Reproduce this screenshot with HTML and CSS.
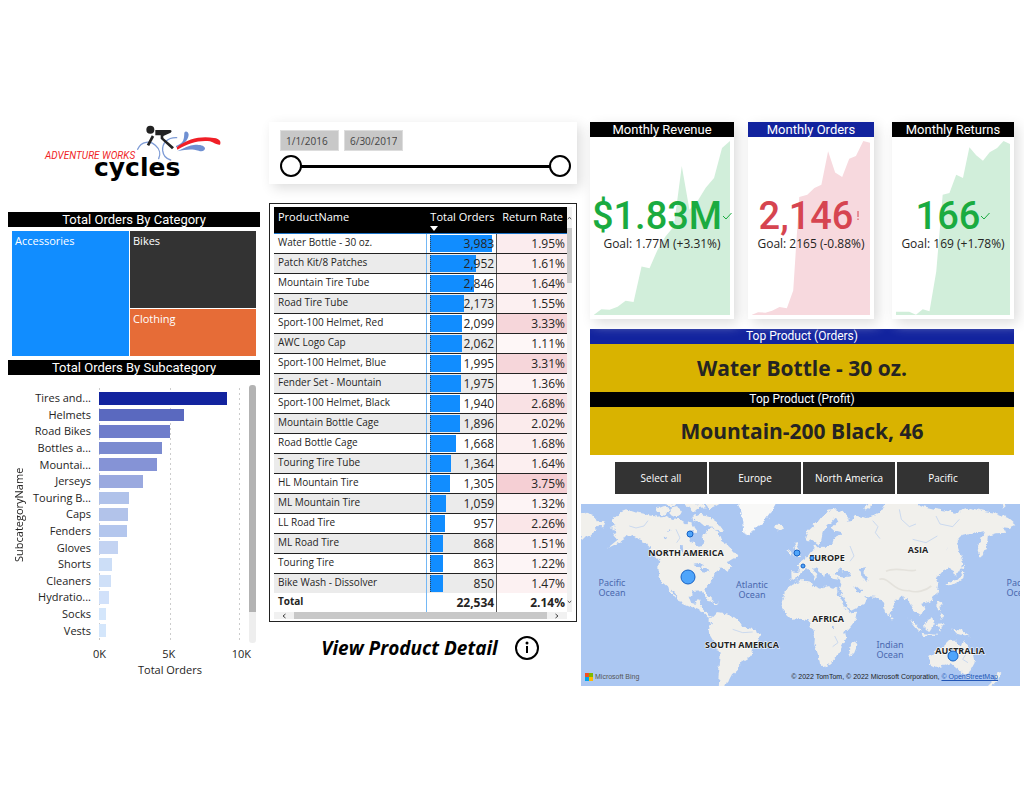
FILE: index.html
```html
<!DOCTYPE html>
<html lang="en">
<head>
<meta charset="utf-8">
<title>Adventure Works Cycles</title>
<link rel="stylesheet" href="styles.css">
</head>
<body>
<main class="report">
  <section class="col col-left">
    <svg class="logo" viewBox="8 122 252 90" role="img" aria-label="Adventure Works Cycles">
      <g transform="translate(0 110) scale(.33333)" fill="none" stroke-linecap="round">
        <path d="M413 118C424 92 452 92 466 106C480 118 482 134 476 146" stroke="#7d9bd6" stroke-width="4"/>
        <path d="M530 83C502 82 486 100 488 122C490 138 500 147 512 150" stroke="#7d9bd6" stroke-width="4"/>
        <path d="M528 108C552 98 552 88 553 68C556 62 565 64 566 74C564 92 552 103 528 112Z" fill="#6f90d2"/>
        <path d="M532 124C560 118 574 116 596 122C606 126 616 122 615 114C612 106 600 104 586 104C566 106 552 114 532 124Z" fill="#6f90d2"/>
        <path d="M530 112C566 84 604 78 642 84C660 86 664 96 660 104C652 106 642 98 630 94C596 90 566 100 532 119Z" fill="#f01f27"/>
        <circle cx="451" cy="59" r="12" fill="#222"/>
        <path d="M466 60L511 60Q518 62 512 68L490 78L490 84L522 112L516 118L482 86L482 76L466 76Z" fill="#222"/>
        <path d="M459 78L444 106" stroke="#222" stroke-width="8" stroke-linecap="butt"/>
      </g>
      <text class="logo-top" x="45" y="159">ADVENTURE WORKS</text>
      <text class="logo-main" x="94" y="176">cycles</text>
    </svg>

    <h2 class="bar-title">Total Orders By Category</h2>
    <div class="treemap">
      <div class="tile accessories">Accessories</div>
      <div class="tile bikes">Bikes</div>
      <div class="tile clothing">Clothing</div>
    </div>

    <h2 class="bar-title">Total Orders By Subcategory</h2>
    <div class="chart">
      <div class="y-title">SubcategoryName</div>
      <div class="labels">
        <span>Tires and...</span><span>Helmets</span><span>Road Bikes</span><span>Bottles a...</span><span>Mountai...</span><span>Jerseys</span><span>Touring B...</span><span>Caps</span><span>Fenders</span><span>Gloves</span><span>Shorts</span><span>Cleaners</span><span>Hydratio...</span><span>Socks</span><span>Vests</span>
      </div>
      <div class="plot">
        <i style="width:90.5%;background:#12239e"></i><i style="width:60%;background:#5a69bf"></i><i style="width:50.5%;background:#6f7dcb"></i><i style="width:44.7%;background:#7b8bd0"></i><i style="width:41%;background:#8593d6"></i><i style="width:31%;background:#9aa9df"></i><i style="width:21.2%;background:#b0c2ea"></i><i style="width:20.7%;background:#b2c3ea"></i><i style="width:20%;background:#b3c6ed"></i><i style="width:13.5%;background:#c3d3f2"></i><i style="width:9.5%;background:#ccdef7"></i><i style="width:8.7%;background:#cfe0f8"></i><i style="width:7.2%;background:#d1e1fa"></i><i style="width:5.3%;background:#d4e6fb"></i><i style="width:5.3%;background:#d4e6fb"></i>
      </div>
      <div class="scroll"></div>
      <div class="ticks"><span>0K</span><span>5K</span><span>10K</span></div>
      <div class="x-title">Total Orders</div>
    </div>
  </section>

  <section class="col col-mid">
    <div class="slicer">
      <div class="dates">
        <input type="text" value="1/1/2016" aria-label="Start date">
        <input type="text" value="6/30/2017" aria-label="End date">
      </div>
      <div class="range">
        <input type="range" min="0" max="100" value="0" aria-label="Range start">
        <input class="range-end" type="range" min="0" max="100" value="100" aria-label="Range end">
      </div>
    </div>

    <div class="matrix">
      <table>
        <thead><tr><th>ProductName</th><th>Total Orders<svg class="sort" viewBox="0 0 8 5"><path d="M0 0H8L4 5Z"/></svg></th><th>Return Rate</th></tr></thead>
        <tbody>
          <tr><td>Water Bottle - 30 oz.</td><td><i style="width:89%"></i><b>3,983</b></td><td style="background:#fbecee">1.95%</td></tr>
          <tr><td>Patch Kit/8 Patches</td><td><i style="width:66%"></i><b>2,952</b></td><td style="background:#fceff0">1.61%</td></tr>
          <tr><td>Mountain Tire Tube</td><td><i style="width:63%"></i><b>2,846</b></td><td style="background:#fceff0">1.64%</td></tr>
          <tr><td>Road Tire Tube</td><td><i style="width:49%"></i><b>2,173</b></td><td style="background:#fcf0f1">1.55%</td></tr>
          <tr><td>Sport-100 Helmet, Red</td><td><i style="width:47%"></i><b>2,099</b></td><td style="background:#f6d6da">3.33%</td></tr>
          <tr><td>AWC Logo Cap</td><td><i style="width:46%"></i><b>2,062</b></td><td style="background:#fef7f7">1.11%</td></tr>
          <tr><td>Sport-100 Helmet, Blue</td><td><i style="width:45%"></i><b>1,995</b></td><td style="background:#f6d6da">3.31%</td></tr>
          <tr><td>Fender Set - Mountain</td><td><i style="width:45%"></i><b>1,975</b></td><td style="background:#fdf3f4">1.36%</td></tr>
          <tr><td>Sport-100 Helmet, Black</td><td><i style="width:44%"></i><b>1,940</b></td><td style="background:#f9e1e4">2.68%</td></tr>
          <tr><td>Mountain Bottle Cage</td><td><i style="width:43%"></i><b>1,896</b></td><td style="background:#fbebec">2.02%</td></tr>
          <tr><td>Road Bottle Cage</td><td><i style="width:38%"></i><b>1,668</b></td><td style="background:#fceff0">1.68%</td></tr>
          <tr><td>Touring Tire Tube</td><td><i style="width:30%"></i><b>1,364</b></td><td style="background:#fceff0">1.64%</td></tr>
          <tr><td>HL Mountain Tire</td><td><i style="width:29%"></i><b>1,305</b></td><td style="background:#f5cfd4">3.75%</td></tr>
          <tr><td>ML Mountain Tire</td><td><i style="width:24%"></i><b>1,059</b></td><td style="background:#fdf4f5">1.32%</td></tr>
          <tr><td>LL Road Tire</td><td><i style="width:22%"></i><b>957</b></td><td style="background:#fae6e8">2.26%</td></tr>
          <tr><td>ML Road Tire</td><td><i style="width:19%"></i><b>868</b></td><td style="background:#fcf1f2">1.51%</td></tr>
          <tr><td>Touring Tire</td><td><i style="width:19%"></i><b>863</b></td><td style="background:#fdf5f6">1.22%</td></tr>
          <tr><td>Bike Wash - Dissolver</td><td><i style="width:19%"></i><b>850</b></td><td style="background:#fcf1f2">1.47%</td></tr>
        </tbody>
        <tfoot><tr><td>Total</td><td><b>22,534</b></td><td>2.14%</td></tr></tfoot>
      </table>
      <div class="vbar">
        <svg viewBox="0 0 6 4"><path d="M1 3.500L3 1L5 3.500"/></svg>
        <div class="vthumb"></div>
        <svg viewBox="0 0 6 4"><path d="M1 .5L3 3L5 .5"/></svg>
      </div>
      <div class="hbar">
        <svg viewBox="0 0 4 6"><path d="M3.500 1L1 3L3.500 5"/></svg>
        <div class="hthumb"></div>
        <svg viewBox="0 0 4 6"><path d="M.5 1L3 3L.5 5"/></svg>
      </div>
    </div>

    <a class="detail" href="#detail">View Product Detail
      <svg viewBox="0 0 26 26"><circle cx="13" cy="13" r="11"/><path d="M13 11V18"/><circle class="dot" cx="13" cy="8" r="1.500"/></svg>
    </a>
  </section>

  <section class="col col-right">
    <div class="kpis">
      <article class="kpi revenue">
        <h2 class="bar-title">Monthly Revenue</h2>
        <div class="kpi-body">
          <svg class="area" viewBox="30 79 409 521" preserveAspectRatio="none"><path d="M30 599L52 583L77 584L101 575L125 557L149 561L173 455L197 460L221 405L245 365L270 335L294 154L317 285L342 258L366 219L391 190L415 100L439 79V600H30Z"/></svg>
          <div class="kpi-text">
            <p class="value">$1.83M<svg viewBox="0 0 10 8"><path d="M1 4L4 7L9.500 1"/></svg></p>
            <p class="goal">Goal: 1.77M (+3.31%)</p>
          </div>
        </div>
      </article>
      <article class="kpi orders">
        <h2 class="bar-title blue">Monthly Orders</h2>
        <div class="kpi-body">
          <svg class="area" viewBox="507 79 352 521" preserveAspectRatio="none"><path d="M507 599L525 592L547 593L567 587L589 576L611 580L630 527L648 247L672 240L693 220L714 210L734 110L755 173L776 187L797 132L817 124L839 79L859 84V600H507Z"/></svg>
          <div class="kpi-text">
            <p class="value">2,146<svg viewBox="0 0 10 8"><path d="M5 -1V5M5 6.500V8"/></svg></p>
            <p class="goal">Goal: 2165 (-0.88%)</p>
          </div>
        </div>
      </article>
      <article class="kpi returns">
        <h2 class="bar-title">Monthly Returns</h2>
        <div class="kpi-body">
          <svg class="area" viewBox="291 79 337 521" preserveAspectRatio="none"><path d="M291 590H330L350 599L370 583L390 589L410 470L429 240L449 235L469 180L489 190L508 98L528 122L548 138L568 113L590 100L609 79L628 88V600H291Z"/></svg>
          <div class="kpi-text">
            <p class="value">166<svg viewBox="0 0 10 8"><path d="M1 4L4 7L9.500 1"/></svg></p>
            <p class="goal">Goal: 169 (+1.78%)</p>
          </div>
        </div>
      </article>
    </div>

    <div class="tops">
      <h2 class="bar-title light blue">Top Product (Orders)</h2>
      <p class="top">Water Bottle - 30 oz.</p>
      <h2 class="bar-title light">Top Product (Profit)</h2>
      <p class="top">Mountain-200 Black, 46</p>
    </div>

    <div class="regions">
      <button type="button">Select all</button>
      <button type="button">Europe</button>
      <button type="button">North America</button>
      <button type="button">Pacific</button>
    </div>

    <div class="map">
      <svg class="world" viewBox="581 504 439 182">
        <defs>
          <filter id="coast" x="-5%" y="-5%" width="110%" height="110%"><feTurbulence type="fractalNoise" baseFrequency="0.17" numOctaves="3" seed="4"/><feDisplacementMap in="SourceGraphic" scale="6" xChannelSelector="R" yChannelSelector="G"/></filter>
        </defs>
        <rect x="581" y="504" width="439" height="182" fill="#abc7f2"/>
        <g filter="url(#coast)">
          <g transform="translate(576 496) scale(.33333)" fill="#f1f0ec">
            <path d="M10 58L30 50L50 56L62 70L87 82L82 94L60 92L62 104L48 112L36 124L24 128L10 122Z"/>
            <path d="M135 46L150 40L175 48L205 54L240 62L265 60L290 72L310 68L330 82L345 78L350 95L338 112L346 138L368 152L384 150L380 126L392 102L410 92L430 118L436 135L455 148L470 163L484 182L462 195L448 190L460 205L472 212L452 224L438 214L428 224L415 235L410 252L396 264L388 278L396 302L386 304L376 286L350 288L338 302L344 320L358 324L366 310L378 314L374 332L386 346L398 358L408 362L400 368L380 348L350 336L322 324L304 300L286 278L296 304L288 296L272 270L260 260L249 238L247 212L250 192L238 176L222 156L205 136L180 126L165 118L150 126L128 140L108 150L92 158L124 132L112 118L120 106L104 96L120 86L108 74L122 60Z"/>
            <path d="M240 38L262 30L280 42L272 56L250 54ZM284 34L306 30L318 48L300 62L284 54ZM270 22H300L292 30H276ZM320 22H380L390 34L366 36L352 50L336 34ZM350 62L372 56L398 62L412 74L430 86L444 106L430 112L412 92L388 90L372 76L352 76ZM342 90L360 92L356 106L344 102ZM400 40L420 30L434 22H388Z"/>
            <path d="M400 372L420 351L440 353L470 360L490 375L500 392L530 398L552 413L549 430L535 445L530 467L513 490L495 500L485 520L468 535L460 550L450 575H425L428 540L432 500L434 470L415 440L400 415L398 398L408 385Z"/>
            <path d="M380 296L400 304L412 314L398 312ZM410 318L428 320L424 326L410 324Z"/>
            <path d="M483 18L495 40L500 70L505 105L515 122L528 112L540 92L560 80L575 60L590 40L602 18Z" fill="#f8f8f7"/>
            <path d="M598 94L604 86L620 87L624 97L611 105L601 101ZM652 140L662 138L662 150L670 165L678 178L662 184L652 180L660 168ZM638 166L648 162L650 174L640 180Z"/>
            <path d="M643 226L666 228L672 222L660 206L676 196L694 182L704 168L716 156L712 148L718 146L724 154L748 152L768 144L772 130L788 122L800 110L778 104L768 96L784 78L778 66L764 82L750 96L740 110L736 128L730 146L718 138L706 130L696 140L688 124L696 106L716 86L736 60L758 44L780 40L810 54L822 70L812 78L830 74L836 58L852 62L872 66L896 60L914 46L922 30L940 18H1010L1040 30L1080 40L1110 44L1140 50L1180 36L1220 44L1256 50L1296 66L1320 86L1300 96L1280 94L1290 110L1262 112L1236 120L1232 150L1212 186L1205 166L1216 130L1224 106L1190 110L1160 116L1142 138L1150 165L1160 198L1150 226L1138 242L1134 226L1118 216L1100 226L1090 238L1076 246L1086 272L1080 298L1062 314L1036 320L1046 344L1030 356L1014 344L1004 324L980 302L960 312L946 344L937 364L925 332L915 312L898 302L866 300L850 288L874 306L866 324L822 346L810 332L790 284L796 262L790 252L766 248L764 234L752 228L748 242L736 236L728 222L710 214L724 238L718 248L702 226L690 216L680 226L664 242L660 256L644 250Z"/>
            <path d="M625 290L645 264L660 258L690 254L704 257L708 268L735 278L755 270L785 278L795 300L810 335L818 352L846 350L840 370L825 390L805 412L808 430L795 455L785 478L765 502L742 514L732 506L728 480L715 446L717 420L708 400L698 374L680 368L648 371L622 346L616 325Z"/>
            <path d="M820 470L824 450L838 434L844 446L835 470L825 480ZM944 354L950 364L944 368Z"/>
            <path d="M998 368L1012 376L1038 406L1028 404ZM1034 410L1080 416L1078 420L1036 416ZM1044 382L1072 366L1076 384L1064 404L1046 398ZM1082 384L1100 382L1092 406ZM1128 398L1156 404L1184 422L1160 416L1144 414ZM1082 318L1092 322L1096 342L1086 336ZM1090 352L1104 360L1098 370ZM1108 266L1124 256L1140 252L1158 238L1154 222L1164 228L1162 246L1142 262L1118 268ZM1150 214L1166 206L1168 216Z"/>
            <path d="M1060 480L1084 462L1104 450L1120 434L1142 434L1144 446L1158 450L1165 432L1174 454L1190 470L1196 500L1180 530L1162 532L1140 516L1124 502L1108 508L1080 516L1062 506ZM1172 542L1182 542L1178 550ZM1262 526L1276 536L1268 548L1258 540ZM1256 550L1262 556L1246 570L1236 570Z"/>
            <path d="M1276 22L1290 30L1280 38ZM870 26L888 22L882 34L868 44Z"/>
          </g>
          <g transform="translate(576 496) scale(.33333)" fill="#abc7f2">
            <path d="M776 232L792 220L812 226L824 240L804 244L782 242ZM852 216L866 214L866 234L876 252L866 258L856 240ZM352 204L370 200L384 208L376 214L392 220L398 228L382 226L372 214ZM272 104L282 100L284 106ZM262 124L276 120L272 130ZM310 150L320 146L322 170L314 166ZM768 388L776 386L776 396L768 396ZM1116 158L1120 152L1112 166Z"/>
            <path d="M786 282L812 332" stroke="#abc7f2" stroke-width="8"/>
            <path d="M836 272L856 290" stroke="#abc7f2" stroke-width="9"/>
          </g>
        </g>
        <g transform="translate(576 496) scale(.33333)" fill="none" stroke="#b6cdf0" stroke-width="2">
          <path d="M890 74L906 92L898 110L912 128M970 40L976 70L1000 92L1020 84M1080 60L1092 84L1130 92L1150 70M1010 130L1050 140L1084 120M300 100L312 126L302 140M216 74L204 90L180 96L160 90M470 400L500 410L530 408M776 420L786 440L770 452M1176 464L1160 490L1176 500M822 150L834 180L822 196M720 180L740 196L770 190"/>
          <path d="M910 250C940 240 950 288 1000 284C1020 292 1050 284 1066 270M930 226C960 210 1000 230 1020 222" stroke="#e4e2dc" stroke-width="5"/>
        </g>
        <g class="continent">
          <text x="686" y="556">NORTH AMERICA</text><text x="742" y="648">SOUTH AMERICA</text><text x="827" y="561">EUROPE</text><text x="918" y="553">ASIA</text><text x="828" y="622">AFRICA</text><text x="960" y="654">AUSTRALIA</text>
        </g>
        <g class="bubbles">
          <circle cx="688" cy="577" r="7"/><circle cx="690" cy="534" r="3"/><circle cx="797" cy="553" r="3"/><circle cx="803" cy="566" r="2"/><circle cx="812" cy="558" r="2"/><circle cx="953" cy="656" r="5"/>
        </g>
        <g class="ocean">
          <text x="612" y="586">Pacific</text><text x="612" y="596">Ocean</text>
          <text x="752" y="588">Atlantic</text><text x="752" y="598">Ocean</text>
          <text x="890" y="648">Indian</text><text x="890" y="658">Ocean</text>
          <text x="1020" y="586">Pacific</text><text x="1020" y="596">Ocean</text>
        </g>
      </svg>
      <div class="credits">
        <span class="bing"><svg viewBox="0 0 8 8"><path fill="#f25022" d="M0 0H4V4H0Z"/><path fill="#7fba00" d="M4 0H8V4H4Z"/><path fill="#00a4ef" d="M0 4H4V8H0Z"/><path fill="#ffb900" d="M4 4H8V8H4Z"/></svg>Microsoft Bing</span>
        <span>© 2022 TomTom, © 2022 Microsoft Corporation, <a href="#osm">© OpenStreetMap</a></span>
      </div>
    </div>
  </section>
</main>
</body>
</html>
```
FILE: styles.css
```css
* { box-sizing: border-box; }
body { margin: 0; background: #fff; color: #252423; font-family: "Open Sans", "Noto Sans", sans-serif; font-size: 11px; }
h2, p { margin: 0; }
svg { display: block; }

.report { display: grid; grid-template-columns: 252fr 313fr 439fr; gap: 4px; align-items: start; padding: 122px 4px 0 8px; }
.col { min-width: 0; }
.col-mid { padding-left: 5px; }

.bar-title { background: #000; color: #fff; font: 400 13px/15px Roboto, sans-serif; text-align: center; height: 15px; white-space: nowrap; }
.bar-title.light { font-size: 12px; }
.bar-title.blue { background: #12239e; }

.logo { width: 100%; height: 90px; }
.logo-top { font: italic 400 10px Roboto, sans-serif; fill: #f01f27; }
.logo-main { font: 700 25px "DejaVu Sans", sans-serif; fill: #000; }

.treemap { display: grid; grid-template: 77px 47px / 117fr 126fr; gap: 1px; padding: 4px; }
.tile { color: #fff; padding: 2px 3px; font-size: 11px; line-height: 15px; }
.accessories { grid-row: span 2; background: #118dff; }
.bikes { background: #333; }
.clothing { background: #e66c37; }

.chart { display: grid; grid-template: 258px 20px 14px / 22px 61px 142fr 9px 7px; padding: 10px 4px 0 0; }
.y-title { writing-mode: vertical-rl; transform: rotate(180deg); text-align: center; line-height: 14px; font-size: 11px; align-self: start; justify-self: center; height: 260px; }
.labels, .plot { display: flex; flex-direction: column; padding: 5px 0 4px; }
.labels span { flex: 1; display: flex; align-items: center; justify-content: flex-end; line-height: 16px; }
.plot { margin-left: 8px; align-items: flex-start; gap: 4px; padding: 7px 0 6px; background-image: repeating-linear-gradient(#fff 0 3px, transparent 3px 5px), linear-gradient(90deg, #ccc 1px, transparent 1px 71px, #ccc 71px 72px, transparent 72px calc(100% - 1px), #ccc calc(100% - 1px)); }
.plot i { flex: 1; }
.scroll { grid-column: 5; border-radius: 3px; background: linear-gradient(#b3b3b3 88%, #eee 88%); }
.ticks { grid-column: 3 / 6; display: flex; justify-content: space-between; align-items: center; padding: 0 5px 0 2px; }
.x-title { grid-column: 3 / 5; text-align: center; line-height: 14px; }

.slicer { height: 62px; padding: 8px 6px 0 11px; box-shadow: 4px 4px 12px #ddd; background: #fff; }
.dates { display: flex; gap: 5px; }
.dates input { width: 59px; height: 21px; border: 1px solid #ddd; background: #c8c8c8; color: #444; font: 10px "Open Sans", sans-serif; padding: 0 5px; }
.range { position: relative; height: 23px; margin-top: 4px; }
.range input { appearance: none; display: block; width: 100%; height: 22px; margin: 0; background: linear-gradient(#000, #000) center / calc(100% - 22px) 3px no-repeat; }
.range .range-end { position: absolute; inset: 0; background: none; pointer-events: none; }
.range input::-webkit-slider-thumb { appearance: none; width: 22px; height: 22px; border: 2px solid #000; border-radius: 50%; background: #fff; pointer-events: auto; }

.matrix { display: grid; grid-template-columns: 1fr 5px; margin-top: 19px; border: 1px solid #222; padding: 3px 4px 2px; }
table { width: 100%; border-collapse: collapse; table-layout: fixed; }
th { background: #000; color: #fff; height: 26px; padding: 2px 4px 0; font-size: 11px; font-weight: 400; line-height: 15px; text-align: left; vertical-align: top; border-bottom: 1px solid #1a73c8; white-space: nowrap; }
th:first-child { width: 52%; }
th:nth-child(2) { width: 24%; text-align: right; position: relative; }
th:nth-child(3) { text-align: right; }
.sort { width: 8px; height: 5px; position: absolute; left: 4px; bottom: 2px; }
td { height: 20px; padding: 0; border-bottom: 1px solid #222; font-size: 12px; line-height: 18px; text-align: right; white-space: nowrap; }
td:first-child { padding: 0 0 3px 4px; text-align: left; font-size: 10px; line-height: 16px; border-right: 1px solid #74b8f5; }
td:nth-child(2) { position: relative; padding: 1px 2px 0 0; border-right: 1px solid #555; }
td:nth-child(3) { padding: 1px 2px 0 0; }
tbody tr:nth-child(even) { background: #ebebeb; }
tbody tr:last-child td, tfoot td { border-bottom: 0; }
tfoot td { height: 18px; }
td i { position: absolute; left: 3px; top: 1px; bottom: 1px; background: #118dff; border-left: 1px dotted #345; }
td b { position: relative; font-weight: 400; }
tfoot td, tfoot td b { font-weight: 700; }
.vbar { display: flex; flex-direction: column; justify-content: space-between; background: #f1f1f1; padding: 9px 0 8px; }
.vbar svg { width: 5px; height: 4px; }
.vthumb { height: 55px; background: #c8c8c8; margin: 8px 0 auto; }
.matrix path { fill: none; stroke: #444; }
.matrix .sort path { fill: #fff; stroke: none; }
.hbar { display: flex; align-items: center; justify-content: space-between; gap: 8px; background: #f1f1f1; padding: 0 8px; height: 7px; }
.hbar svg { width: 4px; height: 6px; }
.hthumb { flex: 1; height: 7px; background: #c8c8c8; }

.detail { display: flex; justify-content: center; align-items: center; gap: 16px; margin-top: 12px; padding-left: 15px; color: #000; font: italic 700 19px/28px "Open Sans", sans-serif; text-decoration: none; white-space: nowrap; }
.detail svg { width: 26px; height: 26px; fill: none; stroke: #000; stroke-width: 2; }
.detail .dot { fill: #000; stroke: none; }

.kpis { display: flex; gap: 14px; margin: 0 6px 0 9px; }
.kpi { min-width: 0; height: 197px; display: flex; flex-direction: column; box-shadow: 4px 4px 12px #ddd; background: #fff; }
.revenue { flex: 144; } .orders { flex: 126; } .returns { flex: 122; margin-left: 4px; }
.kpi-body { display: grid; grid-template-columns: minmax(0, 1fr); flex: 1; padding: 4px; }
.area { grid-area: 1 / 1; width: 100%; height: 174px; fill: #d1eeda; }
.orders .area { fill: #f7d9de; }
.kpi-text { grid-area: 1 / 1; justify-self: center; z-index: 1; text-align: center; padding-top: 55px; white-space: nowrap; }
.value { display: flex; align-items: center; justify-content: center; color: #1aab40; font: 500 38px/40px Roboto, sans-serif; }
.value svg { width: 10px; height: 8px; overflow: visible; fill: none; stroke: currentColor; }
.orders .value { color: #d64550; }
.goal { font-size: 12px; line-height: 16px; }

.tops { margin: 10px 6px 0 9px; }
.top { background: #d9b300; font-size: 21px; font-weight: 700; line-height: 48px; text-align: center; }
.regions { display: grid; grid-template-columns: repeat(4, 1fr); gap: 2px; margin: 7px 31px 10px 34px; }
.regions button { height: 32px; border: 0; background: #333; color: #fff; font: 10px "Open Sans", sans-serif; padding: 0; }

.map { position: relative; overflow: hidden; }
.world { width: 100%; height: auto; }
.bubbles { fill: #4fa5fb; stroke: #1762c4; stroke-width: 1; }
.continent { font: 700 9px "Open Sans", sans-serif; fill: #222; text-anchor: middle; paint-order: stroke; stroke: #fff; stroke-width: 1; }
.ocean { font: 9px "Noto Sans", sans-serif; fill: #4a68ae; text-anchor: middle; }
.credits { position: absolute; inset: auto 22px 3px 4px; display: flex; justify-content: space-between; align-items: center; font: 7px/12px "Liberation Sans", sans-serif; color: #222; }
.credits a { color: #2255b5; }
.bing { display: flex; align-items: center; gap: 2px; color: #555; }
.bing svg { width: 8px; height: 8px; }
```
